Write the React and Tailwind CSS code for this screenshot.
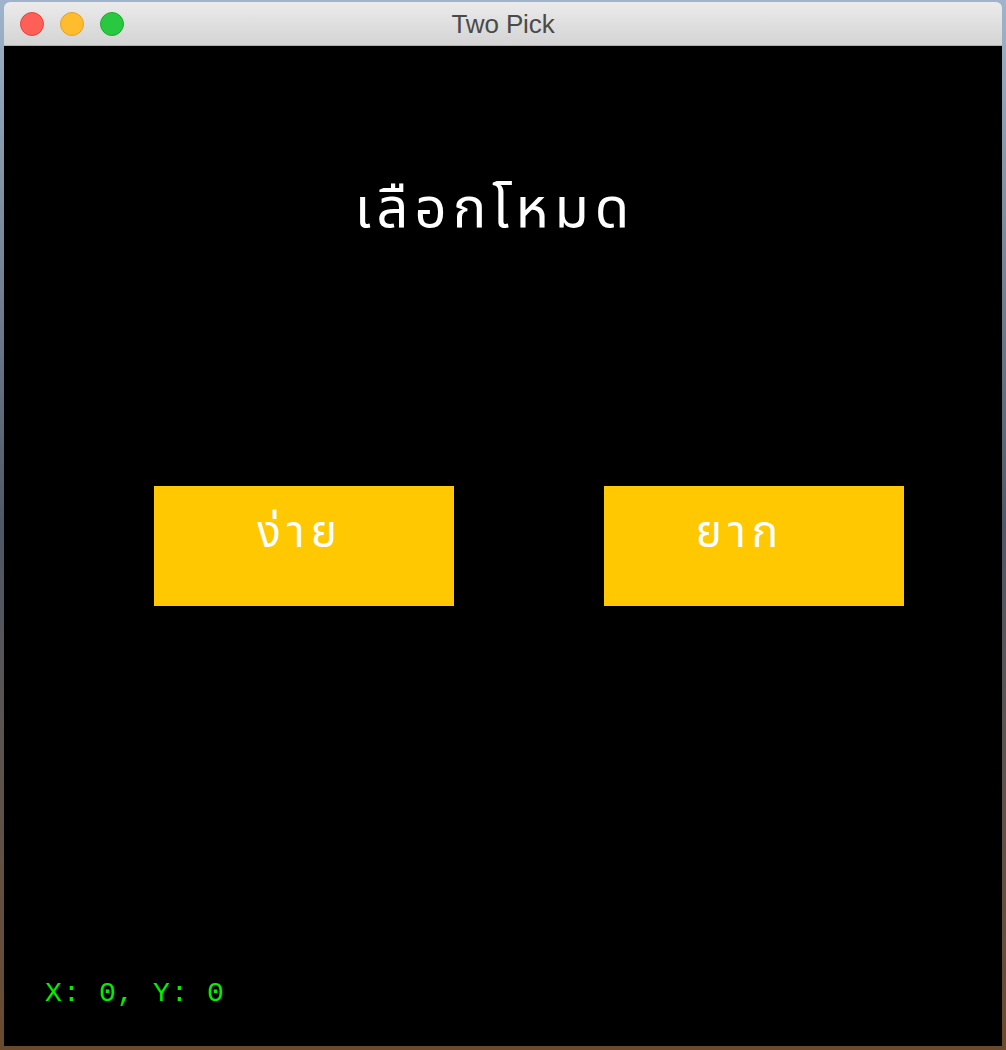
export default function App() {
  return (
    <div className="w-[1006px] h-[1050px] bg-gradient-to-b from-[#9fb4cc] via-[#4f5866] to-[#6a4a2c] pt-[2px] px-[4px] pb-[4px]">
      <div className="w-[998px] h-[1044px] flex flex-col rounded-t-[6px] overflow-hidden">
        <div className="h-[44px] shrink-0 bg-gradient-to-b from-[#ebebeb] to-[#d4d4d4] border-b border-[#b1b1b1] relative flex items-center justify-center">
          <div className="absolute left-[16px] top-[10px] flex gap-[16px]">
            <span className="w-[24px] h-[24px] rounded-full bg-[#fe5f57] border border-[#e2463f]" />
            <span className="w-[24px] h-[24px] rounded-full bg-[#febc2e] border border-[#e1a325]" />
            <span className="w-[24px] h-[24px] rounded-full bg-[#28c840] border border-[#1dad2b]" />
          </div>
          <span className="text-[26px] text-[#4a4a4a] leading-none font-['Liberation_Sans',sans-serif] tracking-[-0.1px]">Two Pick</span>
        </div>
        <div className="flex-1 bg-black flex flex-col font-['Noto_Sans_Thai','Noto_Sans',sans-serif]">
          <div className="pt-[136px] h-[440px] flex justify-center pr-[16px]">
            <h1 className="text-white text-[56px] leading-none tracking-[6px]">เลือกโหมด</h1>
          </div>
          <div className="flex pl-[150px] gap-[150px]">
            <button className="w-[300px] h-[120px] bg-[#ffc800] flex justify-center items-start pt-[26px] pr-[8px] text-white text-[44px] leading-none tracking-[6px]">ง่าย</button>
            <button className="w-[300px] h-[120px] bg-[#ffc800] flex justify-center items-start pt-[26px] pr-[28px] text-white text-[44px] leading-none tracking-[6px]">ยาก</button>
          </div>
          <div className="mt-auto pl-[41px] pb-[38px] text-[#00f000] text-[28px] leading-none tracking-[1.2px] font-['Liberation_Mono',monospace]">X: 0, Y: 0</div>
        </div>
      </div>
    </div>
  );
}
